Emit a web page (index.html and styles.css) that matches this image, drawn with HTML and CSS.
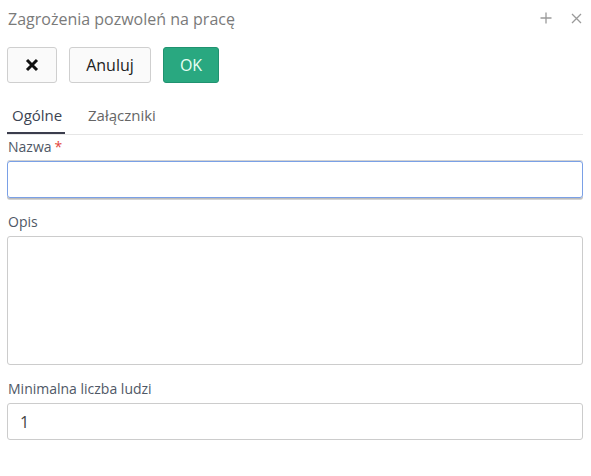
FILE: index.html
```html
<!DOCTYPE html>
<html lang="pl">
<head>
<meta charset="utf-8">
<link rel="stylesheet" href="styles.css">
</head>
<body>
<div class="dialog">
  <div class="header">
    <div class="title">Zagrożenia pozwoleń na pracę</div>
    <div class="hicons">
      <svg class="hicon" width="12" height="12" viewBox="0 0 12 12"><path d="M6 0.5V11.5M0.5 6H11.5" stroke="#9a9a9a" stroke-width="1.3" fill="none"/></svg>
      <svg class="hicon" width="11" height="11" viewBox="0 0 11 11"><path d="M1 1L10 10M10 1L1 10" stroke="#9a9a9a" stroke-width="1.3" fill="none"/></svg>
    </div>
  </div>
  <div class="toolbar">
    <button class="btn btn-x"><svg width="14" height="14" viewBox="0 0 14 14"><path d="M2 2L12 12M12 2L2 12" stroke="#111" stroke-width="3" stroke-linecap="butt" fill="none"/></svg></button>
    <button class="btn btn-cancel">Anuluj</button>
    <button class="btn btn-ok">OK</button>
  </div>
  <div class="tabs">
    <div class="tab active">Ogólne</div>
    <div class="tab">Załączniki</div>
  </div>
  <div class="form">
    <label class="lbl">Nazwa<span class="req">*</span></label>
    <div class="input focus"></div>
    <label class="lbl lbl-gap">Opis</label>
    <div class="textarea"></div>
    <label class="lbl lbl-gap">Minimalna liczba ludzi</label>
    <div class="input">1</div>
  </div>
</div>
</body>
</html>
```
FILE: styles.css
```css
html, body { margin: 0; padding: 0; background: #fff; }
body { font-family: "Open Sans", "Noto Sans", sans-serif; }
.dialog { width: 591px; height: 476px; box-sizing: border-box; padding: 0 8px 0 7px; }
.header { display: flex; justify-content: space-between; align-items: center; height: 36px; }
.title { font-size: 16px; color: #7a7a7a; padding-left: 1px; padding-top: 1px; }
.hicons { display: flex; align-items: center; gap: 19px; padding-right: 1px; padding-top: 0px; }
.hicon { display: block; }
.toolbar { display: flex; gap: 12px; margin-top: 11px; }
.btn { height: 36px; box-sizing: border-box; border: 1px solid #cfcfcf; border-radius: 3px; background: #fafafa; font-family: "Open Sans", sans-serif; font-size: 16px; color: #222; padding: 0; display: flex; align-items: center; justify-content: center; }
.btn-x { width: 50px; }
.btn-cancel { width: 82px; }
.btn-ok { width: 56px; background: #29a880; border-color: #209270; color: #e8fff5; }
.tabs { display: flex; margin-top: 20px; border-bottom: 1px solid #e6e6e6; height: 31px; box-sizing: content-box; }
.tab { font-size: 15px; color: #666; padding: 0 5px; line-height: 24px; height: 31px; box-sizing: border-box; margin-right: 13px; }
.tab.active { color: #3c4452; border-bottom: 2px solid #3b3d4d; width: 58px; margin-right: 18px; }
.form { display: flex; flex-direction: column; }
.lbl { font-size: 14px; color: #4f5866; padding-left: 1px; line-height: 20px; margin-top: 2px; height: 24px; }
.lbl-gap { margin-top: 14px; }
.req { color: #e2443a; margin-left: 3px; }
.input { height: 37px; box-sizing: border-box; border: 1px solid #cccccc; border-radius: 3px; font-size: 16px; color: #444; padding: 0 0 0 12px; display: flex; align-items: center; width: 576px; }
.input.focus { border-color: #7aa0e6; box-shadow: 0 -1px 0 #d2d2d2, 0 1px 0 #bcbcbc, 0 2px 0 #d4d4d4; height: 37px; margin-top: 0; }
.textarea { height: 129px; box-sizing: border-box; border: 1px solid #cccccc; border-radius: 3px; width: 576px; }
```
